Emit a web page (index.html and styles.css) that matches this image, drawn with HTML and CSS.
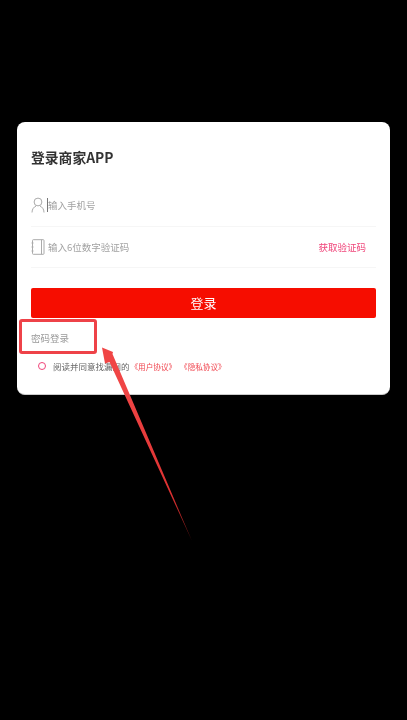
FILE: index.html
```html
<!DOCTYPE html>
<html lang="zh-CN">
<head>
<meta charset="utf-8">
<title>登录商家APP</title>
<link rel="stylesheet" href="styles.css">
</head>
<body>
<main class="screen">
  <section class="card">
    <h1 class="title">登录商家APP</h1>
    <div class="field field-phone">
      <svg class="icon-user" viewBox="0 0 14 16" width="14" height="16" aria-hidden="true"><circle cx="7" cy="5" r="3.9"/><path d="M1 15.5c0-3.6 2-5.6 4-6.4M13 15.5c0-3.6-2-5.6-4-6.4"/></svg>
      <span class="caret"></span>
      <span class="placeholder">输入手机号</span>
    </div>
    <div class="field field-code">
      <svg class="icon-book" viewBox="0 0 14 16" width="14" height="16" aria-hidden="true"><rect x="1.5" y="0.7" width="11.5" height="14.6" rx="0.8"/><path d="M10.5 0.7v14.6M0.5 4h2M0.5 8h2M0.5 12h2"/></svg>
      <span class="placeholder placeholder-code">输入6位数字验证码</span>
      <span class="get-code">获取验证码</span>
    </div>
    <button class="submit" type="button">登录</button>
    <div class="pw-login">密码登录</div>
    <div class="agree">
      <span class="radio"></span>
      <span class="agree-text">阅读并同意找漏网的</span>
      <span class="link">《用户协议》</span>
      <span class="link">《隐私协议》</span>
    </div>
  </section>
  <div class="mark-box"></div>
  <svg class="mark-arrow" viewBox="0 0 407 720" width="407" height="720" aria-hidden="true">
    <defs>
      <linearGradient id="fade" gradientUnits="userSpaceOnUse" x1="125" y1="390" x2="192" y2="541">
        <stop offset="0" stop-color="#f04545"/>
        <stop offset="0.7" stop-color="#dc3030"/>
        <stop offset="1" stop-color="#701414"/>
      </linearGradient>
    </defs>
    <path d="M102 347.5 L113 352 L112.5 354 L192 541 L109.5 362 L105 363.5 Z" fill="url(#fade)"/>
  </svg>
</main>
</body>
</html>
```
FILE: styles.css
```css
* { box-sizing: border-box; }
html, body { margin: 0; padding: 0; background: #000; }
.screen {
  position: relative;
  width: 407px;
  height: 720px;
  padding: 122px 17px 0;
  background: #000;
  overflow: hidden;
  font-family: "Noto Sans CJK SC", "Noto Sans", sans-serif;
  filter: blur(0.6px);
}
.card {
  width: 373px;
  height: 273px;
  padding: 24px 14px 0;
  background: #fff;
  border-radius: 8px;
  border-bottom: 1px solid #ccc;
}
.title {
  margin: 0;
  height: 22px;
  font-size: 13.8px;
  line-height: 22px;
  font-weight: 700;
  color: #333;
}
.field {
  display: flex;
  align-items: center;
  border-bottom: 1px solid #f6f6f6;
}
.field-phone { height: 43px; margin-top: 16px; }
.field-code { height: 41px; }
.icon-user, .icon-book {
  flex: none;
  fill: none;
  stroke: #aaa;
  stroke-width: 1;
}
.caret {
  width: 1px;
  height: 14px;
  margin-left: 2px;
  background: #777;
}
.placeholder {
  font-size: 9.5px;
  color: #a2a2a2;
  white-space: nowrap;
}
.placeholder-code { margin-left: 3px; }
.get-code {
  margin-left: auto;
  margin-right: 10px;
  font-size: 9.5px;
  color: #f0457a;
  white-space: nowrap;
}
.submit {
  display: block;
  width: 345px;
  height: 30px;
  margin: 20px 0 0;
  padding: 0;
  border: 0;
  border-radius: 2px;
  background: #f60d00;
  color: #fff;
  font-family: inherit;
  font-size: 13px;
  line-height: 30px;
}
.pw-login {
  margin-top: 11px;
  height: 18px;
  font-size: 9.5px;
  line-height: 18px;
  color: #999;
}
.agree {
  display: flex;
  align-items: center;
  gap: 1px;
  height: 14px;
  margin-top: 12px;
  padding-left: 7px;
  font-size: 8.5px;
  white-space: nowrap;
}
.radio {
  flex: none;
  width: 8px;
  height: 8px;
  margin-right: 6px;
  border: 1px solid #f0457a;
  border-radius: 50%;
}
.agree-text { color: #666; }
.link { font-size: 7.6px; color: #f0454f; }
.link + .link { margin-left: 3px; }
.mark-box {
  position: absolute;
  left: 19px;
  top: 319px;
  width: 78px;
  height: 35px;
  border: 3px solid #ee4248;
  border-radius: 3px;
}
.mark-arrow {
  position: absolute;
  left: 0;
  top: 0;
}
```
